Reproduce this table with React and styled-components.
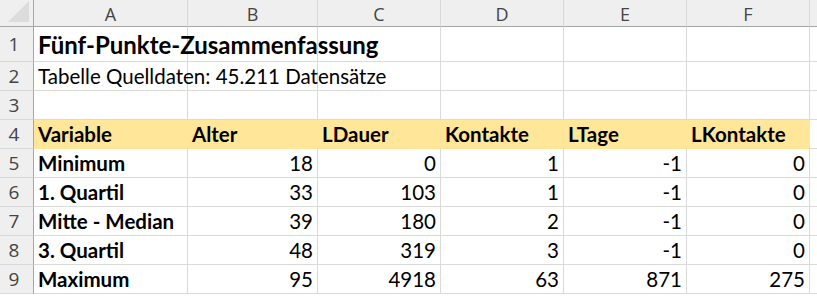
import styled, { createGlobalStyle } from "styled-components";

const GlobalStyle = createGlobalStyle`
  html, body {
    margin: 0;
    padding: 0;
    background: #ffffff;
  }
`;

const columns = ["A", "B", "C", "D", "E", "F"];

const stats = [
  ["Minimum", 18, 0, 1, -1, 0],
  ["1. Quartil", 33, 103, 1, -1, 0],
  ["Mitte - Median", 39, 180, 2, -1, 0],
  ["3. Quartil", 48, 319, 3, -1, 0],
  ["Maximum", 95, 4918, 63, 871, 275],
];

const header = ["Variable", "Alter", "LDauer", "Kontakte", "LTage", "LKontakte"];

const Sheet = styled.div`
  display: grid;
  grid-template-columns: 34px 154px 130px 123px 123px 123px 123px 1fr;
  grid-template-rows: 27px 35px 29px 29px 29px 29px 29px 29px 29px 29px;
  width: 817px;
  height: 300px;
  overflow: hidden;
  font-family: Lato, "Liberation Sans", sans-serif;
  color: #000;
`;

const Corner = styled.div`
  background: #efefef;
  border-right: 1px solid #a6a6a6;
  border-bottom: 1px solid #a6a6a6;
  box-sizing: border-box;
  display: flex;
  align-items: flex-end;
  justify-content: flex-end;
  padding: 0 3px 3px 0;
`;

const Head = styled.div`
  background: #efefef;
  box-sizing: border-box;
  display: flex;
  align-items: center;
  justify-content: center;
  font-family: "Open Sans", "Noto Sans", sans-serif;
  font-size: 18px;
  line-height: 1;
  color: #444;
`;

const ColHead = styled(Head)`
  border-bottom: 1px solid #a6a6a6;
  border-right: 1px solid #d8d8d8;
  padding-top: 1px;
`;

const RowHead = styled(Head)`
  border-right: 1px solid #a6a6a6;
  border-bottom: 1px solid #d8d8d8;
  padding-right: 5px;
  font-size: 19px;
`;

const Cell = styled.div`
  box-sizing: border-box;
  border-right: 1px solid ${(p) => (p.$fill ? p.$fill : "#dadada")};
  border-bottom: 1px solid ${(p) => (p.$fill ? p.$fill : "#dadada")};
  background: ${(p) => p.$fill || "#fff"};
  display: flex;
  align-items: flex-end;
  justify-content: ${(p) => (p.$num ? "flex-end" : "flex-start")};
  padding: 0 4px 4px 4px;
  font-size: ${(p) => (p.$title ? "24px" : "20.5px")};
  font-weight: ${(p) => (p.$bold ? 700 : 400)};
  white-space: nowrap;
  line-height: 1;
`;

// long texts run over the empty cells to their right, as in a sheet
const Spill = styled.span`
  position: relative;
  z-index: 1;
`;

export default function App() {
  const fill = "#ffe699";
  return (
    <>
      <GlobalStyle />
      <Sheet>
        <Corner>
          <svg width="22" height="22" viewBox="0 0 22 22">
            <polygon points="21,0 21,21 0,21" fill="#dcdcdc" />
          </svg>
        </Corner>
        {columns.map((c) => (
          <ColHead key={c}>{c}</ColHead>
        ))}
        <ColHead />

        <RowHead>1</RowHead>
        <Cell $bold $title>
          <Spill>Fünf-Punkte-Zusammenfassung</Spill>
        </Cell>
        {[1, 2, 3, 4, 5, 6].map((i) => (
          <Cell key={i} />
        ))}

        <RowHead>2</RowHead>
        <Cell>
          <Spill>Tabelle Quelldaten: 45.211 Datensätze</Spill>
        </Cell>
        {[1, 2, 3, 4, 5, 6].map((i) => (
          <Cell key={i} />
        ))}

        <RowHead>3</RowHead>
        {[0, 1, 2, 3, 4, 5, 6].map((i) => (
          <Cell key={i} />
        ))}

        <RowHead>4</RowHead>
        {header.map((h) => (
          <Cell key={h} $bold $fill={fill}>
            {h}
          </Cell>
        ))}
        <Cell />

        {stats.map((row, r) => [
          <RowHead key={"h" + r}>{r + 5}</RowHead>,
          ...row.map((v, i) => (
            <Cell key={r + "-" + i} $bold={i === 0} $num={i > 0}>
              {v}
            </Cell>
          )),
          <Cell key={"e" + r} />,
        ])}
      </Sheet>
    </>
  );
}
